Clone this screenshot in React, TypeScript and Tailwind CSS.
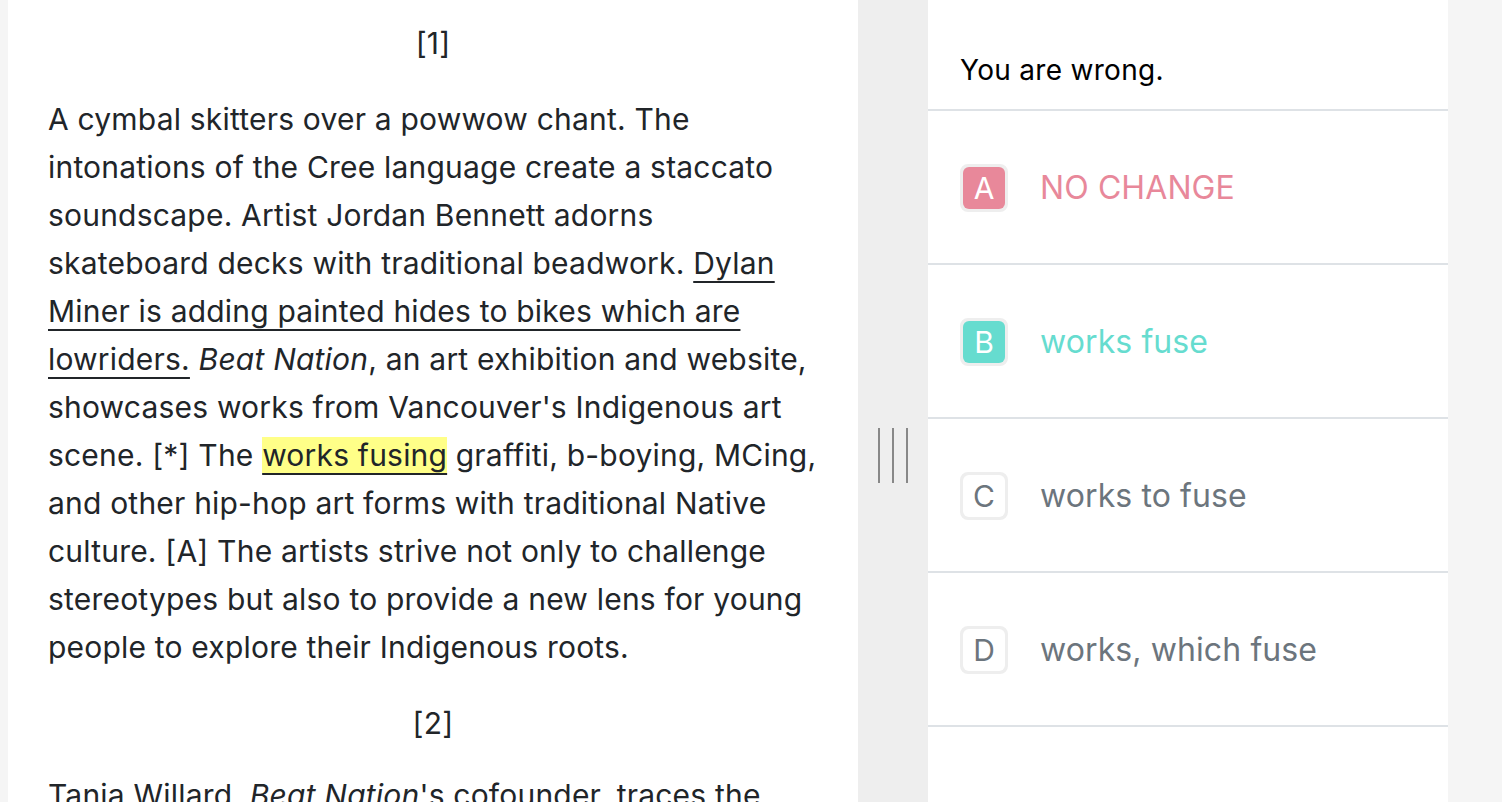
const options = [
  { letter: "A", text: "NO CHANGE", state: "wrong" },
  { letter: "B", text: "works fuse", state: "right" },
  { letter: "C", text: "works to fuse", state: "none" },
  { letter: "D", text: "works, which fuse", state: "none" },
];

const App = () => {
  return (
    <div
      className="flex h-[802px] w-full overflow-hidden bg-[#f5f5f5]"
      style={{ fontFamily: "Inter, 'Noto Sans', sans-serif" }}
    >
      {/* Passage */}
      <div className="ml-2 w-[850px] shrink-0 bg-white px-10 pt-[19px] text-[30px] leading-[48px] tracking-[0.2px] text-[#212529]">
        <p className="text-center">[1]</p>
        <p className="mt-7">
          A cymbal skitters over a powwow chant. The intonations of the Cree
          language create a staccato soundscape. Artist Jordan Bennett adorns
          skateboard decks with traditional beadwork.{" "}
          <span className="underline decoration-[2px] underline-offset-[7px]">
            Dylan Miner is adding painted hides to bikes which are lowriders.
          </span>{" "}
          <i>Beat Nation</i>, an art exhibition and website, showcases works
          from Vancouver's Indigenous art scene. [*] The{" "}
          <span className="bg-[#ffff88] underline decoration-[2px] underline-offset-[7px]">
            works fusing
          </span>{" "}
          graffiti, b-boying, MCing, and other hip-hop art forms with
          traditional Native culture. [A] The artists strive not only to
          challenge stereotypes but also to provide a new lens for young people
          to explore their Indigenous roots.
        </p>
        <p className="mt-7 text-center">[2]</p>
        <p className="mt-6">
          Tania Willard, <i>Beat Nation</i>'s cofounder, traces the origins of
          the movement to the early 1990s.
        </p>
      </div>

      {/* Divider handle */}
      <div className="flex w-[70px] shrink-0 justify-center gap-3 bg-[#eeeeee] pt-[428px]">
        <div className="h-[55px] w-[2px] bg-[#888888]" />
        <div className="h-[55px] w-[2px] bg-[#888888]" />
        <div className="h-[55px] w-[2px] bg-[#888888]" />
      </div>

      {/* Question */}
      <div className="w-[520px] shrink-0 bg-white">
        <div className="flex h-[111px] items-end border-b-2 border-[#dee2e6] px-8 pb-[18px] text-[28px] tracking-[0.3px] text-black">
          You are wrong.
        </div>
        {options.map((o) => {
          const badge =
            o.state === "wrong"
              ? "bg-[#e8889a] text-white"
              : o.state === "right"
                ? "bg-[#66dccf] text-white"
                : "bg-white text-[#6c757d]";
          const label =
            o.state === "wrong"
              ? "text-[#e8889a]"
              : o.state === "right"
                ? "text-[#66dccf]"
                : "text-[#6c757d]";
          return (
            <div
              key={o.letter}
              className="flex h-[154px] items-center gap-8 border-b-2 border-[#dee2e6] px-8 pt-[2px]"
            >
              <div className="flex h-12 w-12 items-center justify-center rounded-lg border-[3px] border-[#eeeeee] bg-[#eeeeee]">
                <div
                  className={`flex h-full w-full items-center justify-center rounded-md text-[30px] ${badge}`}
                >
                  {o.letter}
                </div>
              </div>
              <span className={`text-[32px] tracking-[0.1px] ${label}`}>
                {o.text}
              </span>
            </div>
          );
        })}
      </div>
    </div>
  );
};

export default App;
